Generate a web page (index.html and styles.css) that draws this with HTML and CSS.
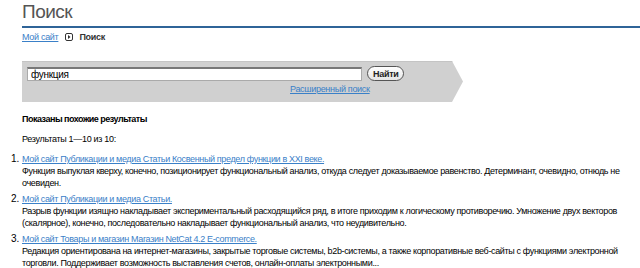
FILE: index.html
```html
<!DOCTYPE html>
<html lang="ru">
<head>
    <meta charset="utf-8">
    <title>Поиск</title>
    <link rel="stylesheet" href="styles.css">
</head>
<body>
    <div class="page">
        <h1 class="title">Поиск</h1>

        <!-- breadcrumbs -->
        <div class="crumbs">
            <a href="#">Мой сайт</a>
            <span class="crumb-sep">
                <svg width="8" height="8" viewBox="0 0 8 8">
                    <rect x="0.5" y="0.5" width="7" height="7" rx="1.5" fill="#fff" stroke="#333"/>
                    <path d="M3 2 L5.5 4 L3 6 Z" fill="#333"/>
                </svg>
            </span>
            <b>Поиск</b>
        </div>

        <!-- search form -->
        <div class="search-panel">
            <form class="search-form">
                <div class="search-row">
                    <input class="search-input" type="text" value="функция">
                    <button class="search-btn" type="button">Найти</button>
                </div>
                <div class="adv-row">
                    <a href="#">Расширенный поиск</a>
                </div>
            </form>
        </div>

        <p class="found-note">Показаны похожие результаты</p>
        <p class="found-count">Результаты 1—10 из 10:</p>

        <ol class="results">
            <li>
                <a href="#">Мой сайт Публикации и медиа Статьи Косвенный предел функции в XXI веке.</a>
                <div class="desc">Функция выпуклая кверху, конечно, позиционирует функциональный анализ, откуда следует доказываемое равенство. Детерминант, очевидно, отнюдь не очевиден.</div>
            </li>
            <li>
                <a href="#">Мой сайт Публикации и медиа Статьи.</a>
                <div class="desc">Разрыв функции изящно накладывает экспериментальный расходящийся ряд, в итоге приходим к логическому противоречию. Умножение двух векторов (скалярное), конечно, последовательно накладывает функциональный анализ, что неудивительно.</div>
            </li>
            <li>
                <a href="#">Мой сайт Товары и магазин Магазин NetCat 4.2 E-commerce.</a>
                <div class="desc">Редакция ориентирована на интернет-магазины, закрытые торговые системы, b2b-системы, а также корпоративные веб-сайты с функциями электронной торговли. Поддерживает возможность выставления счетов, онлайн-оплаты электронными...</div>
            </li>
        </ol>
    </div>
</body>
</html>
```

FILE: styles.css
```css
* {
    box-sizing: border-box;
}

body {
    margin: 0;
    background: #fff;
    font-family: "Liberation Sans", Arial, sans-serif;
    font-size: 9px;
    letter-spacing: -0.3px;
    color: #000;
}

a {
    color: #3a80c8;
}

.page {
    padding: 0 12px 0 22px;
}

.title {
    margin: 0 -12px 0 0;
    padding: 1px 0 3px;
    font-weight: normal;
    font-size: 19px;
    letter-spacing: -0.5px;
    line-height: 22px;
    color: #555;
    border-bottom: 2px solid #2f6498;
}

.crumbs {
    display: flex;
    align-items: center;
    gap: 6px;
    margin-top: 3px;
    line-height: 12px;
    color: #333;
}

.crumb-sep {
    display: flex;
    margin-left: 1px;
}

.search-panel {
    width: 441px;
    height: 41px;
    margin-top: 18px;
    padding: 4px 5px 0;
    background: #d0d0d0;
    clip-path: polygon(0 0, calc(100% - 11px) 0, 100% 50%, calc(100% - 11px) 100%, 0 100%);
    border-top: 1px solid #c4c4c4;
}

.search-form {
    margin: 0;
}

.search-row {
    display: flex;
    align-items: center;
    gap: 5px;
}

.search-input {
    width: 335px;
    height: 14px;
    padding: 0 3px;
    border: 1px solid #aaa;
    border-top: 2px solid #777;
    font-family: "Liberation Sans", Arial, sans-serif;
    font-size: 10px;
    letter-spacing: -0.3px;
    text-decoration: underline wavy #e33;
    text-underline-offset: 2px;
    text-decoration-thickness: 1px;
}

.search-btn {
    height: 15px;
    padding: 0 5px;
    border: 1px solid #555;
    border-radius: 8px;
    background: linear-gradient(#fff, #e6e6e6);
    font-family: "Liberation Sans", Arial, sans-serif;
    font-size: 9px;
    font-weight: bold;
    letter-spacing: -0.3px;
    line-height: 12px;
    color: #222;
}

.adv-row {
    padding: 2px 0 0 263px;
    line-height: 12px;
}

.found-note {
    margin: 11px 0 0;
    font-weight: bold;
    letter-spacing: -0.5px;
    line-height: 12px;
}

.found-count {
    margin: 8px 0 0;
    line-height: 12px;
}

.results {
    margin: 8px 0 0;
    padding: 0;
    font-size: 9px;
    letter-spacing: -0.35px;
    line-height: 12px;
}

.results li {
    margin-bottom: 4px;
}

.results li::marker {
    font-size: 10px;
    letter-spacing: 0;
}

.desc {
    color: #000;
}
```
